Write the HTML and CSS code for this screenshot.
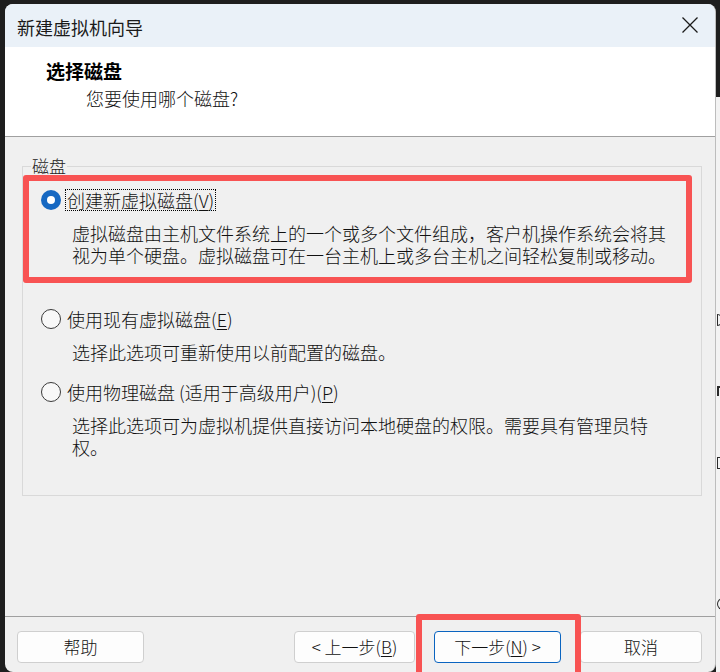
FILE: index.html
```html
<!DOCTYPE html>
<html lang="zh-CN">
<head>
<meta charset="utf-8">
<title>新建虚拟机向导</title>
<link rel="stylesheet" href="styles.css">
</head>
<body>
<div class="screen">
  <div class="window">
    <div class="titlebar">
      <span class="title">新建虚拟机向导</span>
      <svg class="close" width="16" height="16" viewBox="0 0 16 16" aria-hidden="true">
        <path d="M0.5 0.5 L15.5 15.5 M15.5 0.5 L0.5 15.5" stroke="#1a1a1a" stroke-width="1.3" fill="none"/>
      </svg>
    </div>
    <div class="header">
      <div class="h-title">选择磁盘</div>
      <div class="h-sub">您要使用哪个磁盘?</div>
    </div>
    <div class="content">
      <fieldset class="group">
        <legend class="legend">磁盘</legend>
        <div class="option opt1">
          <div class="row"><span class="radio checked"></span><span class="label focus">创建新虚拟磁盘(<u>V</u>)</span></div>
          <p class="desc">虚拟磁盘由主机文件系统上的一个或多个文件组成，客户机操作系统会将其视为单个硬盘。虚拟磁盘可在一台主机上或多台主机之间轻松复制或移动。</p>
        </div>
        <div class="option opt2">
          <div class="row"><span class="radio"></span><span class="label">使用现有虚拟磁盘(<u>E</u>)</span></div>
          <p class="desc">选择此选项可重新使用以前配置的磁盘。</p>
        </div>
        <div class="option opt3">
          <div class="row"><span class="radio"></span><span class="label">使用物理磁盘 (适用于高级用户)(<u>P</u>)</span></div>
          <p class="desc">选择此选项可为虚拟机提供直接访问本地硬盘的权限。需要具有管理员特权。</p>
        </div>
      </fieldset>
    </div>
    <div class="footer">
      <button class="btn btn-help">帮助</button>
      <span class="spacer"></span>
      <button class="btn btn-back">&lt; 上一步(<u>B</u>)</button>
      <button class="btn btn-next">下一步(<u>N</u>) &gt;</button>
      <button class="btn btn-cancel">取消</button>
    </div>
  </div>
  <div class="edge">
    <div class="edge-dark"></div>
    <div class="edge-light">
      <span class="peek p1"></span>
      <span class="peek p2"></span>
      <span class="peek p3"></span>
      <span class="peek p4"></span>
    </div>
  </div>
</div>
<div class="mark mark-option"></div>
<div class="mark mark-next"></div>
</body>
</html>
```
FILE: styles.css
```css
html, body {
  margin: 0;
  padding: 0;
}
body {
  background: #1e1e1e;
  width: 720px;
  height: 672px;
  overflow: hidden;
  position: relative;
  font-family: "Noto Sans CJK SC", "Noto Sans", sans-serif;
  color: #111;
}
.screen {
  display: flex;
  padding: 4px 0 0 5px;
  height: 672px;
  box-sizing: border-box;
}
.window {
  width: 711px;
  height: 668px;
  flex: none;
  display: flex;
  flex-direction: column;
  border-radius: 8px;
  overflow: hidden;
  background: #f0f0f0;
  border-right: 1px solid #bdbdbd;
  box-sizing: border-box;
}
.titlebar {
  height: 43px;
  flex: none;
  background: #eaf1f8;
  display: flex;
  align-items: center;
  justify-content: space-between;
  padding: 3px 17px 0 12px;
  box-sizing: border-box;
}
.title {
  font-size: 18px;
  line-height: 24px;
  color: #1a1a1a;
}
.close {
  display: block;
  margin-bottom: 4px;
}
.header {
  height: 90px;
  flex: none;
  background: #fff;
  border-bottom: 1px solid #a0a0a0;
  box-sizing: border-box;
  padding-top: 11px;
}
.h-title {
  margin-left: 41px;
  font-size: 19px;
  line-height: 26px;
  font-weight: 700;
  color: #000;
}
.h-sub {
  margin-left: 81px;
  margin-top: 1px;
  font-size: 18px;
  line-height: 26px;
  font-weight: 300;
}
.content {
  flex: 1;
  padding-top: 19px;
  box-sizing: border-box;
}
.group {
  margin: 0 0 0 17px;
  width: 680px;
  box-sizing: border-box;
  border: 1px solid #d9d9d9;
  padding: 12px 10px 37px 18px;
  min-inline-size: 0;
}
.legend {
  margin-left: -10px;
  padding: 0 1px;
  font-size: 17px;
  line-height: 20px;
  font-weight: 300;
  color: #222;
}
.option {
  display: flex;
  flex-direction: column;
}
.opt2 {
  margin-top: 41px;
}
.opt3 {
  margin-top: 17px;
}
.row {
  display: flex;
  align-items: center;
  height: 24px;
  gap: 4px;
}
.radio {
  width: 20px;
  height: 20px;
  border-radius: 50%;
  box-sizing: border-box;
  border: 1.3px solid #3a3a3a;
  background: #f8f8f8;
  flex: none;
  position: relative;
}
.radio.checked {
  border: none;
  background: #1668c2;
}
.radio.checked::after {
  content: "";
  position: absolute;
  left: 6px;
  top: 6px;
  width: 8px;
  height: 8px;
  border-radius: 50%;
  background: #fff;
}
.label {
  font-size: 18px;
  line-height: 20px;
  padding: 0 1px;
  border: 1px solid transparent;
  font-weight: 300;
  white-space: nowrap;
}
.label.focus {
  border: 1px dotted #000;
}
.label u, .btn u {
  text-decoration-thickness: 1px;
  text-underline-offset: 2px;
}
.desc {
  margin: 10px 0 0 31px;
  width: 600px;
  font-size: 18px;
  line-height: 22px;
  font-weight: 300;
}
.footer {
  height: 56px;
  flex: none;
  border-top: 1px solid #a0a0a0;
  box-sizing: border-box;
  display: flex;
  align-items: flex-start;
  padding: 14px 13px 0 12px;
  gap: 19px;
}
.spacer {
  flex: 1;
}
.btn {
  height: 32px;
  box-sizing: border-box;
  border: 1px solid #cfcfcf;
  border-radius: 4px;
  background: #fdfdfd;
  font-family: "Noto Sans CJK SC", "Noto Sans", sans-serif;
  font-size: 17px;
  line-height: 20px;
  font-weight: 300;
  color: #111;
  padding: 0;
  display: flex;
  align-items: center;
  justify-content: center;
}
.btn-help {
  width: 127px;
}
.btn-back {
  width: 121px;
}
.btn-next {
  width: 127px;
  border-color: #0a64c0;
}
.btn-cancel {
  width: 122px;
}
.edge {
  flex: 1;
  display: flex;
  flex-direction: column;
  margin-top: -4px;
}
.edge-dark {
  height: 97px;
  background: #1e1e1e;
}
.edge-light {
  flex: 1;
  background: #f3f3f3;
  overflow: hidden;
  position: relative;
}
.peek {
  position: absolute;
  left: 1px;
  width: 6px;
  height: 12px;
  border: 1.5px solid #2a2a2a;
  border-radius: 0 6px 6px 0;
  box-sizing: border-box;
}
.p1 { top: 217px; }
.p2 { top: 289px; height: 10px; border-radius: 0; border-width: 2px 0 0 2px; }
.p3 { top: 360px; border-radius: 0; }
.p4 { top: 501px; border-radius: 6px 0 0 6px; }
.mark {
  position: absolute;
  border: 6px solid #f85353;
  border-radius: 3px;
  box-sizing: border-box;
}
.mark-option {
  left: 23px;
  top: 175px;
  width: 669px;
  height: 108px;
}
.mark-next {
  left: 416px;
  top: 614px;
  width: 165px;
  height: 70px;
}
```
